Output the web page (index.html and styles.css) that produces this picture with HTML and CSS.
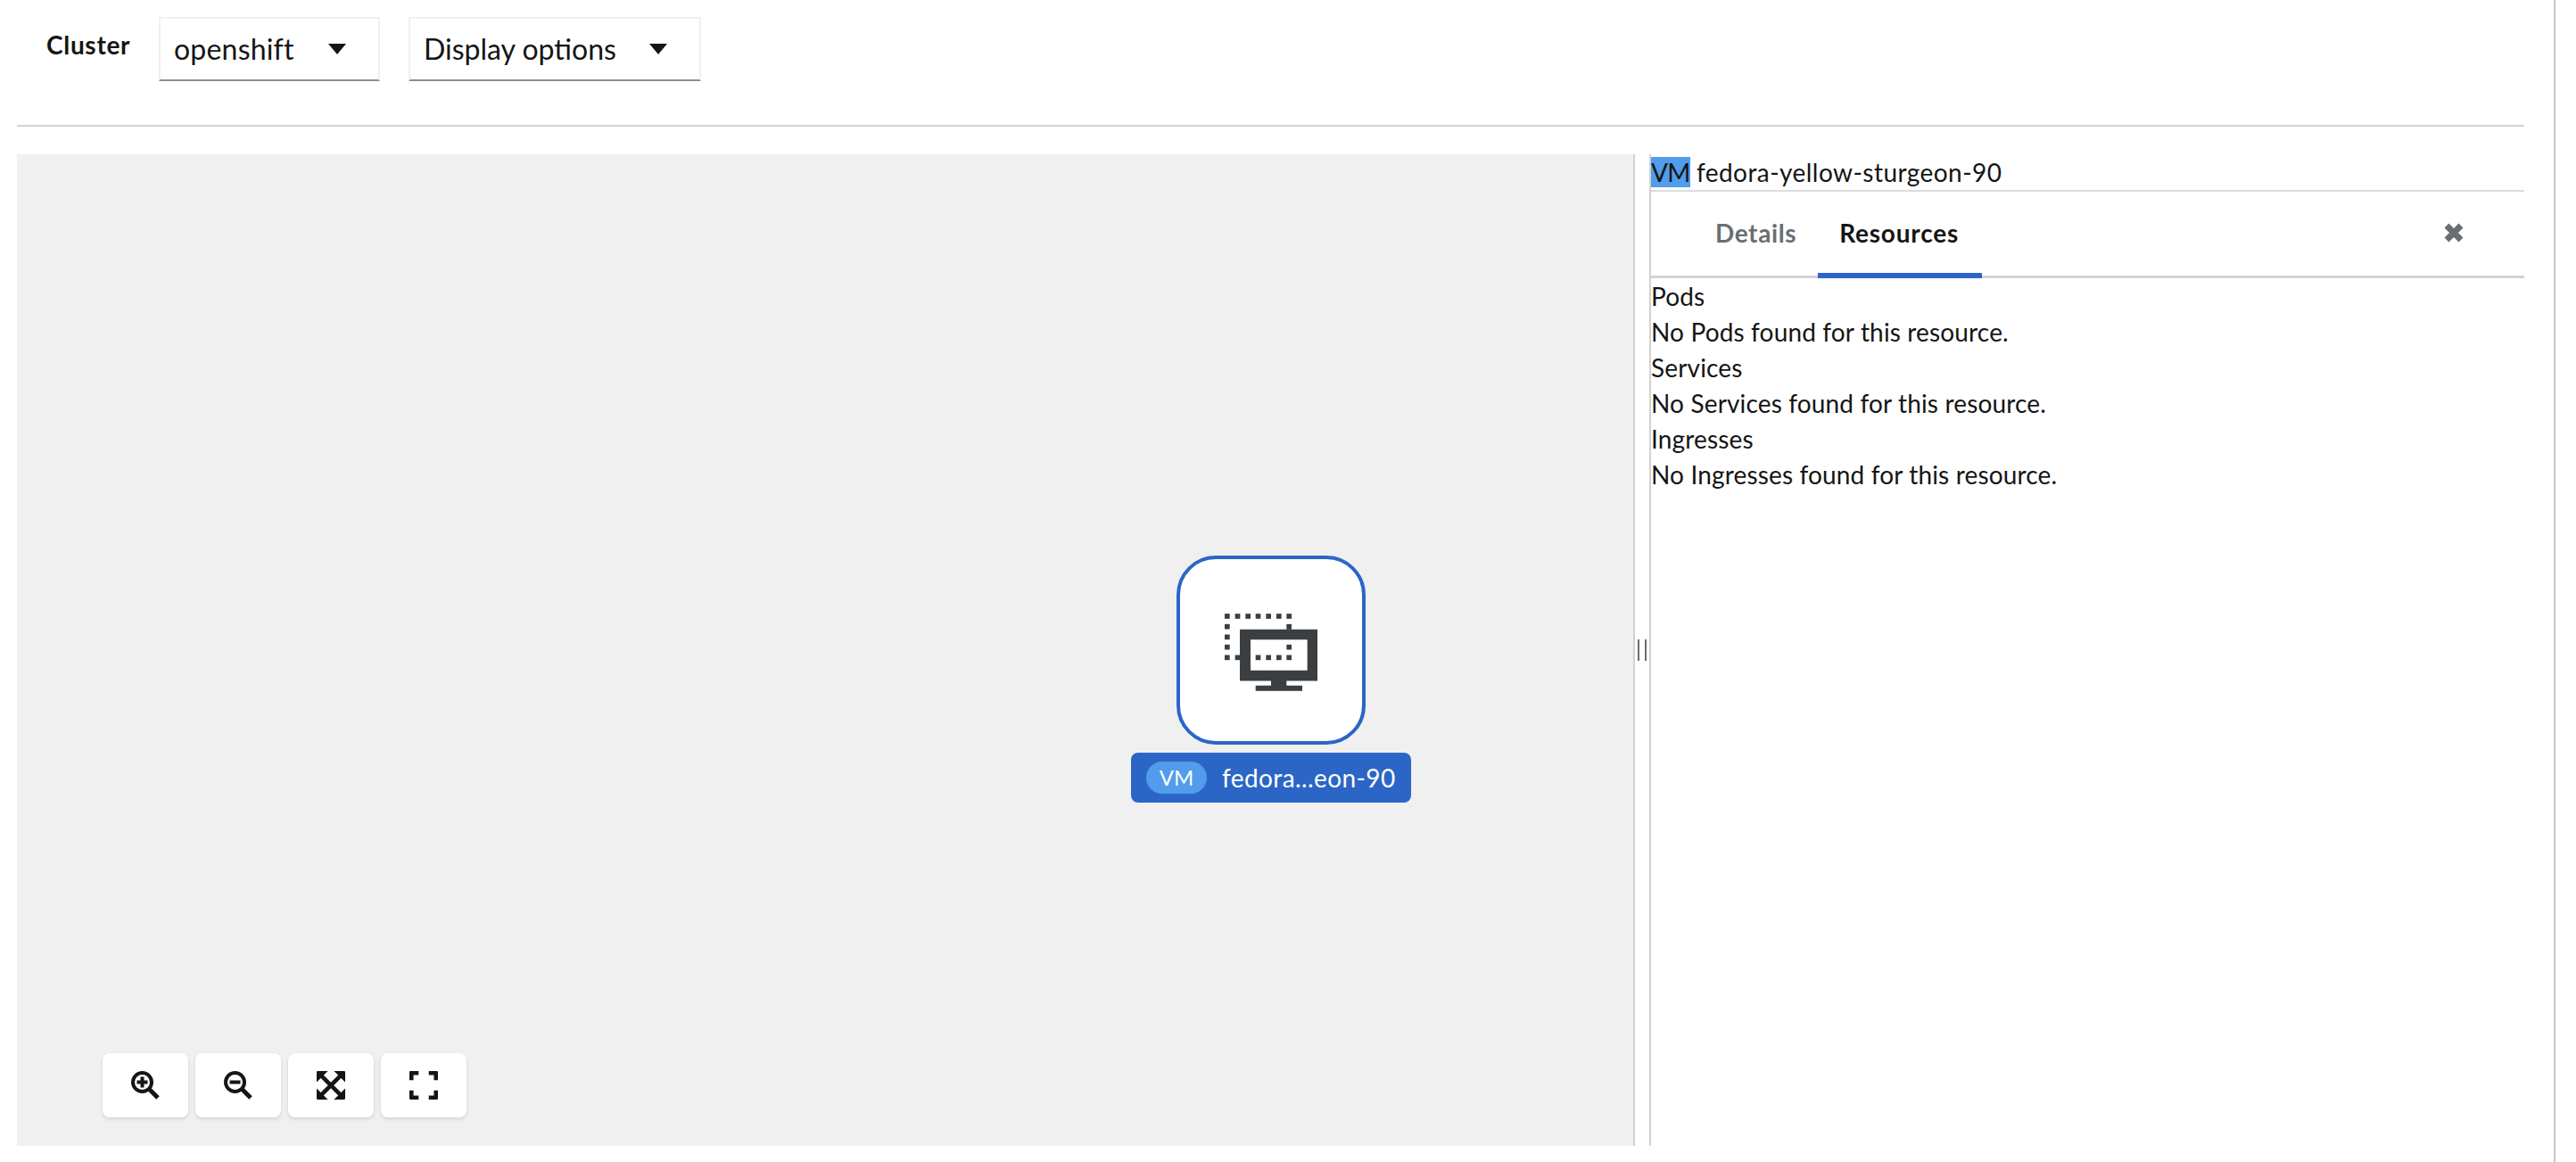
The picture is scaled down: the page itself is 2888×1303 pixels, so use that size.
FILE: index.html
```html
<!DOCTYPE html>
<html lang="en">
<head>
  <meta charset="UTF-8">
  <title>Topology</title>
  <link rel="stylesheet" href="styles.css">
</head>
<body>
  <div class="page">
    <header class="toolbar">
      <span class="toolbar-label">Cluster</span>
      <button class="select select-cluster">
        <span>openshift</span>
        <svg class="caret" viewBox="0 0 20 12"><path d="M0 0h20L10 12z"/></svg>
      </button>
      <button class="select select-display">
        <span>Display options</span>
        <svg class="caret" viewBox="0 0 20 12"><path d="M0 0h20L10 12z"/></svg>
      </button>
    </header>

    <main class="workspace">
      <section class="canvas">
        <div class="node">
          <div class="node-box">
            <svg class="node-icon" viewBox="0 0 312 260">
              <g class="dots">
                <rect x="0" y="0" width="17" height="17"/>
                <rect x="35" y="0" width="17" height="17"/>
                <rect x="70" y="0" width="17" height="17"/>
                <rect x="104" y="0" width="17" height="17"/>
                <rect x="139" y="0" width="17" height="17"/>
                <rect x="174" y="0" width="17" height="17"/>
                <rect x="208" y="0" width="17" height="17"/>
                <rect x="0" y="35" width="17" height="17"/>
                <rect x="0" y="70" width="17" height="17"/>
                <rect x="0" y="104" width="17" height="17"/>
                <rect x="0" y="139" width="17" height="17"/>
                <rect x="35" y="139" width="17" height="17"/>
                <rect x="208" y="35" width="17" height="18"/>
                <rect x="208" y="104" width="17" height="17"/>
                <rect x="104" y="139" width="17" height="17"/>
                <rect x="139" y="139" width="17" height="17"/>
                <rect x="174" y="139" width="17" height="17"/>
                <rect x="208" y="139" width="17" height="17"/>
              </g>
              <path class="monitor" fill-rule="evenodd" d="M51 53h261v173H208v16h53v18H104v-18h52v-16H51zM87 87v104h191V87z"/>
            </svg>
          </div>
          <div class="node-label">
            <span class="node-badge">VM</span>
            <span class="node-name">fedora...eon-90</span>
          </div>
        </div>

        <div class="controls">
          <button class="control">
            <svg viewBox="0 0 32 32"><circle cx="12.500" cy="12.500" r="10.500" class="icon-line"/><path d="M20 20l10 10" class="icon-line icon-handle"/><path d="M12.500 6.500v12M6.500 12.500h12" class="icon-line"/></svg>
          </button>
          <button class="control">
            <svg viewBox="0 0 32 32"><circle cx="12.500" cy="12.500" r="10.500" class="icon-line"/><path d="M20 20l10 10" class="icon-line icon-handle"/><path d="M6.500 12.500h12" class="icon-line"/></svg>
          </button>
          <button class="control">
            <svg viewBox="0 0 28 28"><path class="icon-fill" d="M1 0h10L0 11V1a1 1 0 0 1 1-1zM17 0h10a1 1 0 0 1 1 1v10zM0 17l11 11H1a1 1 0 0 1-1-1zM28 17v10a1 1 0 0 1-1 1H17z"/><path class="icon-line" d="M4 4l20 20M24 4L4 24"/></svg>
          </button>
          <button class="control">
            <svg viewBox="0 0 28 28"><path class="icon-fill" d="M1 0h8v4H4v5H0V1a1 1 0 0 1 1-1zM19 0h8a1 1 0 0 1 1 1v8h-4V4h-5zM0 19h4v5h5v4H1a1 1 0 0 1-1-1zM24 19h4v8a1 1 0 0 1-1 1h-8v-4h5z"/></svg>
          </button>
        </div>
      </section>

      <div class="splitter"><span class="grip"></span></div>

      <aside class="panel">
        <div class="panel-title"><span class="highlight">VM</span> <span class="panel-name">fedora-yellow-sturgeon-90</span></div>
        <nav class="tabs">
          <a class="tab">Details</a>
          <a class="tab tab-active">Resources</a>
          <svg class="close" viewBox="0 0 22 22"><path d="M3 3l16 16M19 3L3 19"/></svg>
        </nav>
        <div class="resources">
          <div>Pods</div>
          <div>No Pods found for this resource.</div>
          <div>Services</div>
          <div>No Services found for this resource.</div>
          <div>Ingresses</div>
          <div>No Ingresses found for this resource.</div>
        </div>
      </aside>
    </main>
  </div>
</body>
</html>
```

FILE: styles.css
```css
html, body {
  margin: 0;
  height: 100%;
}

body {
  font-family: 'Lato', sans-serif;
  font-size: 28px;
  line-height: 40px;
  color: #151515;
  background-color: #fff;
  overflow: hidden;
}

.page {
  width: 2865px;
  height: 1303px;
  box-sizing: border-box;
  padding: 0 33px 18px 19px;
  border-right: 2px solid #c7c7c7;
}

.toolbar {
  display: flex;
  align-items: flex-start;
  height: 142px;
  padding-top: 19px;
  box-sizing: border-box;
  border-bottom: 2px solid #d2d2d2;
}

.toolbar-label {
  width: 159px;
  padding-left: 33px;
  box-sizing: border-box;
  margin-top: 11px;
  font-weight: 700;
  letter-spacing: 0.7px;
}

.select {
  display: flex;
  align-items: center;
  justify-content: space-between;
  height: 72px;
  box-sizing: border-box;
  padding: 0 36px 0 15px;
  border: 2px solid #f0f0f0;
  border-bottom: 2px solid #8a8d90;
  background-color: #fff;
  font: inherit;
  font-size: 32px;
  color: #151515;
}

.select-cluster {
  width: 248px;
  letter-spacing: 0.2px;
}

.select-display {
  width: 328px;
  margin-left: 32px;
}

.caret {
  width: 20px;
  height: 12px;
  fill: #151515;
}

.workspace {
  display: flex;
  height: 1112px;
  margin-top: 31px;
}

.canvas {
  position: relative;
  width: 1812px;
  background-color: #f0f0f0;
}

.node {
  position: absolute;
  left: 1249px;
  top: 450px;
  width: 314px;
  display: flex;
  flex-direction: column;
  align-items: center;
}

.node-box {
  display: flex;
  width: 212px;
  height: 212px;
  box-sizing: border-box;
  align-items: center;
  justify-content: center;
  border: 4px solid #2b66c6;
  border-radius: 44px;
  background-color: #fff;
}

.node-icon {
  width: 104px;
  height: 87px;
  margin-top: 5px;
}

.dots, .monitor {
  fill: #3c3f42;
}

.node-label {
  display: flex;
  align-items: center;
  width: 100%;
  height: 56px;
  margin-top: 9px;
  box-sizing: border-box;
  padding-left: 17px;
  border-radius: 8px;
  background-color: #2b66c6;
  color: #fff;
  font-size: 28px;
}

.node-badge {
  width: 68px;
  height: 36px;
  line-height: 36px;
  border-radius: 18px;
  text-align: center;
  background-color: #519ceb;
  font-size: 24px;
}

.node-name {
  margin-left: 17px;
  letter-spacing: 0.4px;
}

.controls {
  position: absolute;
  left: 96px;
  top: 1008px;
  display: flex;
  gap: 8px;
}

.control {
  display: flex;
  align-items: center;
  justify-content: center;
  width: 96px;
  height: 72px;
  padding: 0;
  border: none;
  border-radius: 8px;
  background-color: #fff;
  box-shadow: 0 2px 4px #0000001f;
}

.control svg {
  width: 32px;
  height: 32px;
}

.icon-line {
  fill: none;
  stroke: #151515;
  stroke-width: 4;
}

.icon-handle {
  stroke-width: 5;
}

.icon-fill {
  fill: #151515;
}

.splitter {
  display: flex;
  align-items: center;
  justify-content: center;
  width: 16px;
  border-left: 2px solid #d2d2d2;
  border-right: 2px solid #d2d2d2;
}

.grip {
  width: 2px;
  height: 24px;
  border-left: 2px solid #6a6e73;
  border-right: 2px solid #6a6e73;
  padding: 0 2px;
}

.panel {
  flex: 1;
}

.panel-title {
  height: 40px;
  border-bottom: 2px solid #dcdcdc;
}

.highlight {
  background-color: #519ceb;
  letter-spacing: -0.6px;
}

.panel-name {
  letter-spacing: 0.45px;
}

.tabs {
  display: flex;
  align-items: stretch;
  height: 97px;
  box-sizing: border-box;
  padding-left: 48px;
  border-bottom: 3px solid #d2d2d2;
  position: relative;
}

.tab {
  display: flex;
  align-items: center;
  box-sizing: border-box;
  padding: 0 24px;
  font-weight: 700;
  letter-spacing: 0.6px;
  color: #6a6e73;
  margin-bottom: -3px;
  border-bottom: 6px solid transparent;
}

.tab-active {
  padding-right: 26px;
  letter-spacing: 0.8px;
  color: #151515;
  border-bottom-color: #2b66c6;
}

.close {
  position: absolute;
  left: 889px;
  top: 35px;
  width: 22px;
  height: 22px;
  fill: none;
  stroke: #6a6e73;
  stroke-width: 7;
}

.resources {
  letter-spacing: 0.15px;
}
```
